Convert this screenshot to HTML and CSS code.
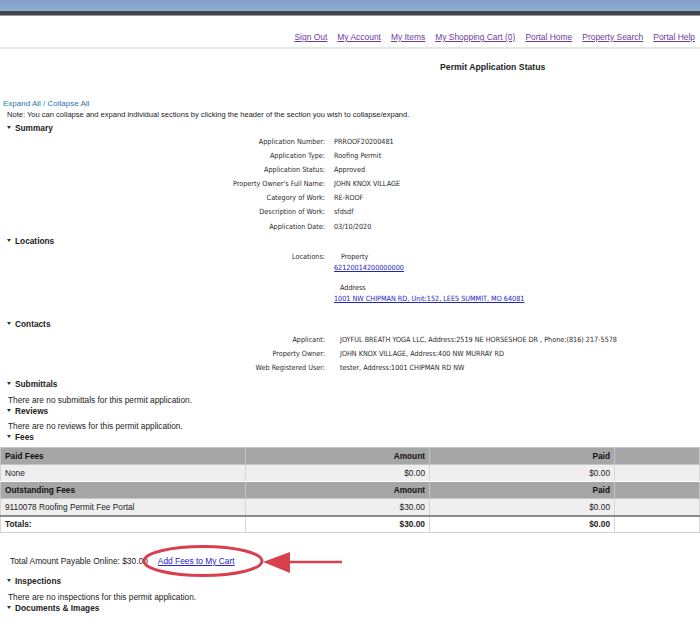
FILE: index.html
```html
<!DOCTYPE html>
<html lang="en">
<head>
    <meta charset="UTF-8">
    <title>Permit Application Status</title>
    <link rel="stylesheet" href="styles.css">
</head>
<body>
    <div class="topbar"></div>
    <div class="darkbar"></div>

    <nav class="links">
        <a href="#">Sign Out</a>
        <a href="#">My Account</a>
        <a href="#">My Items</a>
        <a href="#">My Shopping Cart (0)</a>
        <a href="#">Portal Home</a>
        <a href="#">Property Search</a>
        <a href="#">Portal Help</a>
    </nav>
    <div class="rule"></div>

    <h1 class="title">Permit Application Status</h1>

    <div class="page">
        <a href="#" class="expand">Expand All / Collapse All</a>
        <p class="note">Note: You can collapse and expand individual sections by clicking the header of the section you wish to collapse/expand.</p>

        <h2 class="section">Summary</h2>
        <div class="details summary">
            <span class="label">Application Number:</span><span>PRROOF20200481</span>
            <span class="label">Application Type:</span><span>Roofing Permit</span>
            <span class="label">Application Status:</span><span>Approved</span>
            <span class="label">Property Owner's Full Name:</span><span>JOHN KNOX VILLAGE</span>
            <span class="label">Category of Work:</span><span>RE-ROOF</span>
            <span class="label">Description of Work:</span><span>sfdsdf</span>
            <span class="label">Application Date:</span><span>03/10/2020</span>
        </div>

        <h2 class="section">Locations</h2>
        <div class="details locations">
            <span class="label">Locations:</span>
            <div class="loc-values">
                <div class="loc-head">Property</div>
                <a href="#">62120014200000000</a>
                <div class="loc-head loc-gap">Address</div>
                <a href="#">1001 NW CHIPMAN RD, Unit:152, LEES SUMMIT, MO 64081</a>
            </div>
        </div>

        <h2 class="section">Contacts</h2>
        <div class="details contacts">
            <span class="label">Applicant:</span><span>JOYFUL BREATH YOGA LLC, Address:2519 NE HORSESHOE DR , Phone:(816) 217-5578</span>
            <span class="label">Property Owner:</span><span>JOHN KNOX VILLAGE, Address:400 NW MURRAY RD</span>
            <span class="label">Web Registered User:</span><span>tester, Address:1001 CHIPMAN RD NW</span>
        </div>

        <h2 class="section">Submittals</h2>
        <p class="empty">There are no submittals for this permit application.</p>
        <h2 class="section">Reviews</h2>
        <p class="empty">There are no reviews for this permit application.</p>
        <h2 class="section">Fees</h2>
    </div>

    <table class="fees">
        <tr class="head">
            <td>Paid Fees</td><td class="num">Amount</td><td class="num">Paid</td><td></td>
        </tr>
        <tr class="row">
            <td>None</td><td class="num">$0.00</td><td class="num">$0.00</td><td></td>
        </tr>
        <tr class="head">
            <td>Outstanding Fees</td><td class="num">Amount</td><td class="num">Paid</td><td></td>
        </tr>
        <tr class="row">
            <td>9110078 Roofing Permit Fee Portal</td><td class="num">$30.00</td><td class="num">$0.00</td><td></td>
        </tr>
        <tr class="totals">
            <td>Totals:</td><td class="num">$30.00</td><td class="num">$0.00</td><td></td>
        </tr>
    </table>

    <div class="payable">
        <span>Total Amount Payable Online: $30.00</span>
        <a href="#" class="cart">Add Fees to My Cart</a>
        <svg class="callout" width="360" height="40" viewBox="0 0 360 40">
            <ellipse cx="203" cy="21" rx="59" ry="14.5" fill="none" stroke="#d8404e" stroke-width="3"/>
            <line x1="288" y1="22" x2="342" y2="22" stroke="#d8404e" stroke-width="2.5"/>
            <polygon points="263,22 290,12 290,33" fill="#d8404e"/>
        </svg>
    </div>

    <div class="page">
        <h2 class="section first">Inspections</h2>
        <p class="empty">There are no inspections for this permit application.</p>
        <h2 class="section">Documents &amp; Images</h2>
    </div>
</body>
</html>
```

FILE: styles.css
```css
body {
    font-family: 'Liberation Sans', Arial, sans-serif;
    margin: 0;
    padding: 0;
    background-color: #fff;
    color: #222;
}
.topbar {
    height: 11px;
    background: linear-gradient(#7f9fc8, #8eaed4);
}
.darkbar {
    height: 4px;
    background-color: #444;
    border-bottom: 1px solid #9a9a9a;
}
.links {
    display: flex;
    justify-content: flex-end;
    gap: 10px;
    height: 31px;
    padding-right: 5px;
    align-items: flex-end;
    box-sizing: border-box;
    padding-bottom: 5px;
    font-size: 8.45px;
}
.links a {
    color: #6b3d9a;
}
.rule {
    height: 2px;
    background-color: #e6e6e6;
}
.title {
    font-size: 8.7px;
    font-weight: bold;
    line-height: 12px;
    margin: 12px 0 0 440px;
}
.page {
    padding-left: 3px;
}
.expand {
    display: block;
    margin-top: 26px;
    font-size: 8px;
    line-height: 10px;
    color: #2b73b5;
    text-decoration: none;
}
.note {
    margin: 1px 0 0 4px;
    font-size: 7.55px;
    line-height: 10px;
}
.section {
    font-size: 8.3px;
    font-weight: bold;
    line-height: 12px;
    margin: 2px 0 0 4px;
}
.section::before {
    content: "";
    display: inline-block;
    border-left: 2px solid transparent;
    border-right: 2px solid transparent;
    border-top: 3px solid #333;
    margin: 0 4px 2px 0;
    vertical-align: middle;
}
.empty + .section {
    margin-top: 0;
}
.details {
    display: grid;
    grid-template-columns: 322px 1fr;
    column-gap: 9px;
    font-family: 'DejaVu Sans Condensed', 'DejaVu Sans', sans-serif;
    font-size: 7.2px;
    color: #2a2a2a;
}
.details .label {
    text-align: right;
}
.summary {
    grid-auto-rows: 14.17px;
    align-items: center;
    margin-top: 0;
    margin-bottom: 2px;
}
.locations {
    line-height: 10.5px;
    padding-top: 5px;
    margin-bottom: 14px;
}
.loc-head {
    padding-left: 7px;
}
.loc-gap {
    margin-top: 10px;
    padding-left: 6px;
}
.locations a {
    color: #2424c0;
}
.contacts {
    grid-auto-rows: 14px;
    align-items: center;
    column-gap: 15px;
    margin-top: 2px;
    margin-bottom: 4px;
}
.empty {
    margin: 4.5px 0 0 5px;
    font-size: 8.3px;
    line-height: 10px;
}
.fees {
    width: 100%;
    border-collapse: collapse;
    margin-top: 4px;
    font-size: 8.3px;
}
.fees td {
    height: 17px;
    padding: 0 4px;
    border: 1px solid #d6d6d6;
    box-sizing: border-box;
}
.fees td:nth-child(1) { width: 245px; }
.fees td:nth-child(2) { width: 184px; }
.fees td:nth-child(3) { width: 185px; }
.fees .num {
    text-align: right;
}
.fees .head td {
    background-color: #a6a6a6;
    font-weight: bold;
    color: #111;
    border-color: #c4c4c4;
}
.fees .row td {
    background-color: #efefef;
    border-color: #fff #d6d6d6;
}
.fees .totals td {
    font-weight: bold;
    border-top: 2px solid #8a8a8a;
    border-bottom: 1px solid #cfcfcf;
}
.payable {
    position: relative;
    display: flex;
    gap: 10px;
    align-items: center;
    height: 20px;
    margin-top: 18px;
    padding-left: 10px;
    font-size: 8.4px;
}
.cart {
    color: #2424d0;
}
.callout {
    position: absolute;
    left: 0;
    top: -11px;
}
.section.first {
    margin-top: 4px;
}
```
